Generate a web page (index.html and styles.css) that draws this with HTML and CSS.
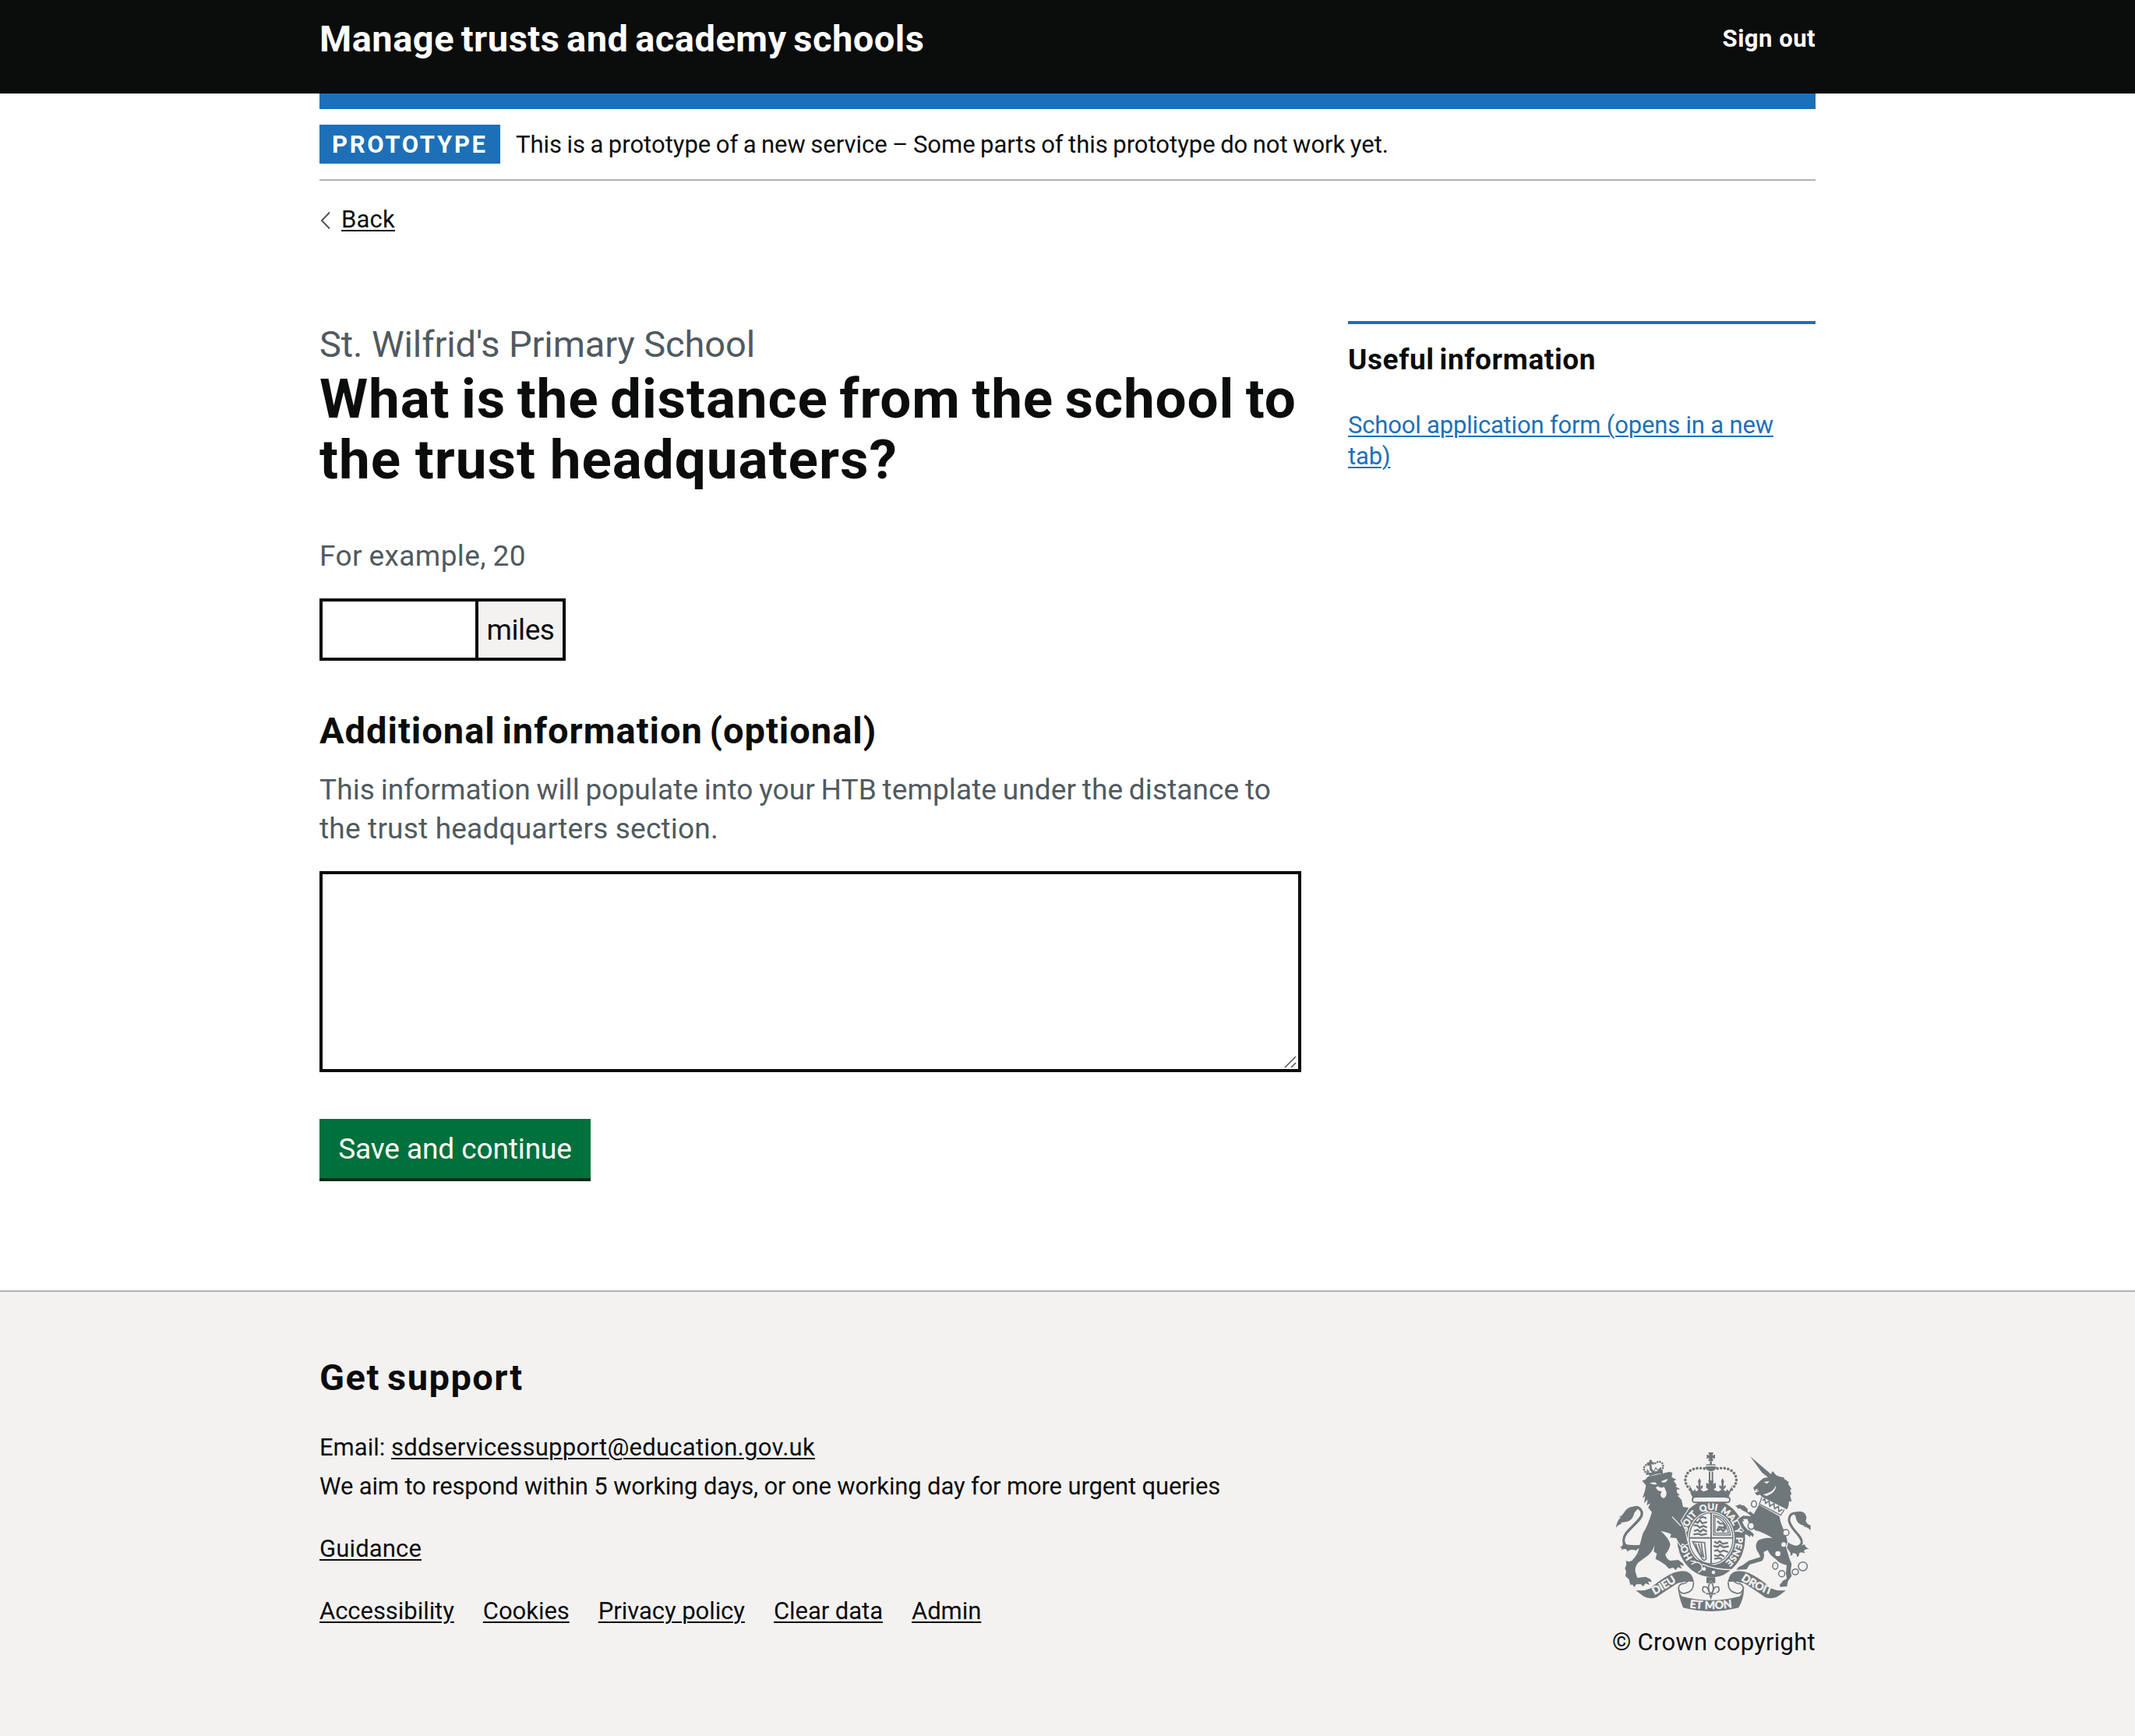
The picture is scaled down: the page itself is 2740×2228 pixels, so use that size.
FILE: index.html
```html
<!DOCTYPE html>
<html lang="en">
<head>
<meta charset="utf-8">
<title>What is the distance from the school to the trust headquaters?</title>
<link rel="stylesheet" href="styles.css">
</head>
<body>
<header class="header">
  <div class="container header-row">
    <a class="header-title" href="#">Manage trusts and academy schools</a>
    <a class="header-link" href="#">Sign out</a>
  </div>
</header>
<div class="container">
  <div class="bar"></div>
  <div class="phase">
    <strong class="tag">PROTOTYPE</strong>
    <span class="phase-text">This is a prototype of a new service – Some parts of this prototype do not work yet.</span>
  </div>
  <a class="back" href="#">
    <svg class="back-arrow" viewBox="0 0 14 24"><path d="M13 1.500 3 12l10 10.500" fill="none" stroke="#505a5f" stroke-width="2"/></svg>
    <span class="back-text">Back</span>
  </a>
  <main class="main">
    <form class="form">
      <span class="caption">St. Wilfrid's Primary School</span>
      <h1 class="title">What is the distance from the school to <span class="title-end">the trust headquaters?</span></h1>
      <div class="hint example">For example, 20</div>
      <div class="input-group">
        <input class="input" type="text">
        <div class="suffix">miles</div>
      </div>
      <label class="label" for="info">Additional information (optional)</label>
      <div class="hint info-hint">This information will populate into your HTB template under the distance to <span class="hint-end">the trust headquarters section.</span></div>
      <div class="textarea-wrap">
        <textarea class="textarea" id="info"></textarea>
        <svg class="grip" viewBox="0 0 18 18"><path d="M2 16 16 2M10 16l6-6" fill="none" stroke="#505050" stroke-width="1.500"/></svg>
      </div>
      <button class="button" type="button">Save and continue</button>
    </form>
    <aside class="aside">
      <h2 class="aside-title">Useful information</h2>
      <a class="aside-link" href="#">School application form (opens in a new tab)</a>
    </aside>
  </main>
</div>
<footer class="footer">
  <div class="container footer-row">
    <div class="support">
      <h2 class="support-title">Get support</h2>
      <p class="support-line">Email: <a class="email" href="#">sddservicessupport@education.gov.uk</a></p>
      <p class="support-line tight">We aim to respond within 5 working days, or one working day for more urgent queries</p>
      <p class="support-line guidance"><a href="#">Guidance</a></p>
      <nav class="links"><a href="#">Accessibility</a><a href="#">Cookies</a><a href="#">Privacy policy</a><a href="#">Clear data</a><a href="#">Admin</a></nav>
    </div>
    <div class="copyright">
      <svg class="crest" viewBox="72 42 750 612">
        <defs>
          <path id="motto" d="M438 484A96 110 0 0 1 438 264A96 110 0 0 1 438 484" pathLength="100"/>
          <path id="scroll-left" d="M212 595Q260 570 312 534"/>
          <path id="scroll-mid" d="M346 638Q437 652 528 638"/>
          <path id="scroll-right" d="M552 532Q606 570 668 591"/>
        </defs>
        <!-- garter and shield -->
        <ellipse class="g" cx="438" cy="373" rx="131" ry="148"/>
        <ellipse class="l" cx="438" cy="373" rx="90" ry="104"/>
        <ellipse class="s3" cx="438" cy="373" rx="84" ry="98"/>
        <path class="s" stroke-width="6" d="M438 275v196M354 371h168"/>
        <path class="s" stroke-width="7" d="M374 308l12 5 8-10 10 12 18-5M370 322l16 2 8 8 14-7 14 6M372 345l14-5 10 8 12-9 14 8M370 358l18-3 12 5 22-4M394 296l12-6 14 6M450 386l12 6 9-8 12 10 20-4M448 402l16 4 8-8 14 9 20-3M450 422l12-4 10 8 14-6 18 6M450 438l14 4 10-7 14 8M450 452l20-3 10 4"/>
        <path class="s3" d="M447 283Q500 290 513 360H447zM453 290Q490 300 505 353H453z"/>
        <path class="s" stroke-width="7" d="M462 306l10 10 14 0 8 18-10 12-8-10-14 8M468 328l18 4 10-10M461 345l8-18"/>
        <path class="s" stroke-width="5" d="M367 386l46 3 6 62q-5 10-14 3Q385 425 367 386zM378 392q12 38 22 50M389 392q8 26 15 52M400 392q3 28 10 56"/>
        <path class="g" d="M462 479Q500 470 521 430L508 480Q490 500 460 500z"/>
        <!-- belt buckle and strap -->
        <path class="g" d="M362 462q20-14 42 2l44 12q40 10 72 10-35 42-85 36-30-2-52-20-22 0-23-18z"/>
        <path class="ls" stroke-width="4" d="M362 473q24-18 40 4 6 20-14 27M404 472q50 22 120 22M358 460l20 2"/>
        <circle class="l" cx="411" cy="491" r="7"/><circle class="l" cx="447" cy="504" r="7"/>
        <g class="motto">
          <text><textPath href="#motto" startOffset="17">HO</textPath></text>
          <text><textPath href="#motto" startOffset="35">SOIT</textPath></text>
          <text><textPath href="#motto" startOffset="48.500">QUI</textPath></text>
          <text><textPath href="#motto" startOffset="61.500">MAL</textPath></text>
          <text><textPath href="#motto" startOffset="70.500">Y</textPath></text>
          <text><textPath href="#motto" startOffset="82.500">PENSE</textPath></text>
        </g>
        <!-- crown -->
        <rect class="ls g2" x="366" y="213" width="144" height="22" rx="11"/>
        <path class="g" d="M354 166l14 26 8-8 4 9 10-8q-14-10-8-16 8 2 7 8 2-16-2-24l6-12 6 12q-4 8-1 24 0-8 7-8 5 8-8 16l12 8 18-7q-8-8-6-14l12 5-5-20h19l-5 20 12-5q2 6-6 14l18 7 12-8q-12-8-8-16 7 0 7 8 3-16-1-24l6-12 6 12q-4 8-2 24-1-6 7-8 6 6-8 16l10 8 4-9 8 8 14-26-10 34-9 18q-66-14-134 0l-9-18z"/>
        <path class="dots" d="M357 185Q336 164 339 143C343 119 360 105 388 103Q404 102 422 106M517 185Q538 164 535 143C531 119 514 105 486 103Q470 102 452 106"/>
        <path class="s" stroke-width="6" d="M432 116v34M443 116v34"/>
        <path class="g" d="M427 42h20l-4 12 10-4v17l-10-4 4 12h-20l4-12-10 4V50l10 4zM433 76h8v12h14v4h-36v-4h14zM416 96h42q-2 18-21 19-19-1-21-19zM427 150h21l-5 14 13-5v22l-13-5 4 14h-20l4-14-12 5v-22l12 5z"/>
        <!-- lion -->
        <path class="g cut" d="M194 136L277 117 289 120 286 137 304 147 294 152 306 168 301 173 319 184 306 185 306 196 318 208 308 207 324 225 330 252 352 255Q330 290 320 305L337 340 346 385 350 392 337 398 326 392 322 402 311 386 304 372 280 370 284 357 272 352 244 344Q275 372 281 396 276 420 262 434 264 450 280 459L312 456 330 470 333 480 318 475 326 490 310 484 302 495 292 486 276 490Q262 472 242 462L224 452 229 432 217 424 220 400Q212 424 196 438L158 466Q144 482 146 500L154 525 186 521 205 530 209 541 195 539 201 553 186 546 176 558 167 549 150 550 142 561 134 550 127 553 122 531 108 518 111 500 106 488 112 474 110 460 122 463 133 459Q160 432 163 400L175 355Q196 320 210 272L196 255 204 238 190 246 194 223 180 238 184 211 174 218 184 187 187 169 172 151 184 148z"/>
        <path class="s" stroke-width="10" d="M164 406C105 425 88 385 112 352C140 318 185 290 168 265C154 242 128 257 118 280"/>
        <path class="g" d="M150 251Q120 246 104 272 96 286 82 292 90 292 92 290 74 306 72 332 82 318 98 316 88 314 92 312 132 310 138 288 142 270 158 258zM98 388Q105 402 165 398L150 420Q120 412 115 428 118 416 106 414 96 414 90 420 100 412 86 406 100 406 98 388z"/>
        <path class="l" d="M202 160l20-3 8 8q-18 3-28-5zM246 153l24-9q0 14-18 15zM224 178q14-13 34-2l8 20q1 18-10 22-11 0-13-14l5-11-14-4z"/>
        <path class="g" d="M232 173l24-7-3 12q-12 0-21-5z"/>
        <path class="ls" stroke-width="4" d="M288 290L322 326"/>
        <path class="s" stroke-width="8" d="M199 131Q222 119 252 119"/>
        <path class="dots small" d="M191 125Q172 106 184 93 194 86 203 93M248 113Q259 90 246 80 233 74 221 86"/>
        <path class="g" d="M201 71h8l2 8 8 1-2 10-9-3 4 31h-9l-3-28-8 1-2-9 9-2zM190 128l1-22 10 11 6-15 10 11 8-15 8 11 12-11 4 18z"/>
        <path class="l" d="M196 119l9-7 5 9zM218 115l8-10 7 9z"/>
        <!-- unicorn -->
        <path class="s" stroke-width="9" d="M744 400Q778 415 787 390C790 362 742 340 738 303C738 280 754 272 776 276"/>
        <path class="g" d="M753 277Q780 262 797 275 810 290 802 305 806 318 821 323V342Q810 328 790 328 800 326 796 324 772 320 766 300 764 284 753 277zM735 388Q762 414 798 396 800 408 817 415 800 412 795 422 802 428 795 430 782 422 776 432 780 440 768 445 772 430 750 430 757 438 742 440 750 432 730 410z"/>
        <path class="g" d="M588 57L659 118 668 126 675 114 688 130Q704 138 720 138L718 143 738 157 734 162 748 184 742 186 748 204 742 206 748 232 738 230 736 248 730 262 632 212 627 205 615 208 606 198 624 190 604 189 601 178 626 152 640 141 657 138 634 120z"/>
        <path class="l" d="M641 156l22-4-10 11zM688 168Q690 195 652 210L638 205Q680 195 688 168zM606 185l14-3-7 8z"/>
        <path class="s3" d="M633 215l-9 26 82 43 14-22"/>
        <path class="s" stroke-width="5" d="M636 228l8-8 4 18 13-9 3 20 16-10 2 20 15-9 2 20 14-8"/>
        <path class="ls" stroke-width="20" stroke-linejoin="round" d="M562 292L548 302 560 328 574 344"/>
        <path class="g" d="M622 244L701 288Q704 315 722 348L732 385 726 405 740 452 748 472 744 500 748 518 734 538 730 558 704 560 702 552 716 535 729 529 726 506 729 476Q700 470 686 452 665 440 656 418L640 426Q646 446 634 460L586 474 575 492 535 494 543 484 564 473 583 459 628 445 620 428Q602 404 618 382 640 368 674 372 640 350 608 342 588 328 578 300L598 288z"/>
        <path class="s" stroke-width="12" stroke-linejoin="round" d="M604 295L562 292 548 302 560 328 574 344M600 286L580 270 562 252 538 252M562 260l26 14"/>
        <path class="g" d="M530 248l20-6 16 10-6 14-14-10zM541 302l14-10 10 14-16 6zM566 338l20 4 16 14-2 12-10-8-2 8-14-10-12 2z"/>
        <g class="chain"><ellipse cx="603" cy="241" rx="10" ry="12"/><ellipse class="l" cx="592" cy="325" rx="12" ry="13"/><circle class="l" cx="726" cy="351" r="12"/><ellipse cx="685" cy="479" rx="10" ry="13"/><circle cx="710" cy="509" r="12"/><ellipse cx="762" cy="502" rx="12" ry="11"/><circle cx="791" cy="481" r="17"/></g>
        <circle class="l" cx="717" cy="397" r="9"/><circle class="l" cx="695" cy="432" r="10"/><circle class="l" cx="584" cy="266" r="6"/>
        <!-- scrolls -->
        <path class="g" d="M148 573Q180 577 203 566 250 525 290 507 350 485 366 522L373 542Q350 536 310 545 255 580 228 600 196 610 172 592zM726 573Q694 577 671 566 624 525 584 507 524 485 508 522L501 542Q524 536 564 545 619 580 646 600 678 610 702 592z"/>
        <path class="ls s5" d="M373 540Q364 566 338 578M501 540Q510 566 536 578"/>
        <path class="s" stroke-width="5" d="M345 505C374 520 346 548 324 548 302 560 316 590 340 584Q372 578 370 542M529 505C500 520 528 548 550 548 572 560 558 590 534 584Q502 578 504 542"/>
        <path class="g" d="M310 552Q312 580 326 596 437 626 548 596 562 580 564 552 568 600 544 640 437 668 330 640 310 590 310 552z"/>
        <path class="g" d="M420 523h34v22h-9l-8-10-8 10h-9z"/>
        <path class="s" stroke-width="5" d="M437 540Q420 560 434 584H441Q454 560 437 540zM430 580Q426 556 408 560 400 578 416 582M444 580Q448 556 466 560 474 578 458 582M418 586h38M432 588l5 14 5-14"/>
        <g class="scroll">
          <text><textPath href="#scroll-left" startOffset="50%">DIEU</textPath></text>
          <text><textPath href="#scroll-mid" startOffset="50%">ET MON</textPath></text>
          <text><textPath href="#scroll-right" startOffset="50%">DROIT</textPath></text>
        </g>
      </svg>
      <span class="copyright-text">© Crown copyright</span>
    </div>
  </div>
</footer>
</body>
</html>
```
FILE: styles.css
```css
* { box-sizing: border-box; }
body { margin: 0; font-family: Roboto, "Liberation Sans", sans-serif; font-size: 31px; line-height: 50px; color: #0b0c0c; background: #fff; -webkit-font-smoothing: antialiased; }
h1, h2, p { margin: 0; }
a { color: inherit; text-decoration-thickness: 2px; text-underline-offset: 3px; }
.container { width: 1920px; margin: 0 auto; }

.header { height: 120px; background: #0b0c0c; color: #fff; }
.header-row { display: flex; justify-content: space-between; align-items: flex-start; }
.header-title, .header-link { font-weight: 700; text-decoration: none; }
.header-title { padding-top: 20px; font-size: 47px; line-height: 60px; letter-spacing: .5px; word-spacing: -3.500px; }
.header-link { padding-top: 30px; line-height: 40px; letter-spacing: .5px; }

.bar { height: 20px; background: #1d70b8; }
.phase { display: flex; gap: 20px; padding: 20px 0; border-bottom: 2px solid #b1b4b6; }
.tag { width: 232px; padding: 2px 0 0 16px; background: #1d70b8; color: #fff; line-height: 48px; letter-spacing: 2.700px; }
.phase-text { padding-top: 2px; line-height: 48px; letter-spacing: 0; word-spacing: -1.250px; }

.back { display: flex; align-items: center; gap: 14px; width: max-content; margin-top: 30px; line-height: 40px; text-decoration: none; }
.back-arrow { width: 14px; height: 24px; margin-top: 1px; }
.back-text { text-decoration: underline 2px; text-underline-offset: 3px; letter-spacing: .2px; }

.main { display: grid; grid-template-columns: 1260px 600px; justify-content: space-between; align-items: start; padding: 110px 0 140px; }
.form { display: flex; flex-direction: column; align-items: flex-start; }
.caption { font-size: 47px; line-height: 60px; color: #505a5f; letter-spacing: -.1px; }
.title { margin-top: 1px; font-size: 71px; line-height: 78px; letter-spacing: .9px; word-spacing: -4px; }
.title-end { letter-spacing: 1px; word-spacing: -1px; }
.hint { font-size: 37px; line-height: 50px; color: #505a5f; letter-spacing: .1px; word-spacing: -1.600px; }
.hint-end { letter-spacing: .2px; word-spacing: 0; }
.example { margin-top: 60px; letter-spacing: .4px; word-spacing: -1px; }
.input-group { display: flex; width: 316px; height: 80px; margin-top: 29px; }
.input { width: 204px; border: 4px solid #0b0c0c; border-radius: 0; background: #fff; }
.suffix { flex: 1; border: 4px solid #0b0c0c; border-left: 0; background: #f3f2f1; font-size: 37px; line-height: 73px; text-align: center; letter-spacing: -.4px; }
.label { margin-top: 60px; font-size: 47px; line-height: 60px; font-weight: 700; letter-spacing: 1px; word-spacing: -4px; }
.info-hint { margin-top: 21px; }
.textarea-wrap { position: relative; width: 1260px; height: 258px; margin-top: 29px; }
.textarea { display: block; width: 100%; height: 100%; border: 4px solid #0b0c0c; border-radius: 0; background: #fff; resize: none; }
.grip { position: absolute; right: 5px; bottom: 4px; width: 18px; height: 18px; }
.button { width: 348px; height: 76px; margin: 60px 0 4px; padding: 2px 0 0; border: 0; background: #00703c; box-shadow: 0 4px 0 #002d18; color: #fff; font: 37px/74px Roboto, sans-serif; letter-spacing: -.1px; }

.aside { border-top: 4px solid #1d70b8; padding-top: 21px; }
.aside-title { font-size: 37px; line-height: 50px; letter-spacing: .6px; word-spacing: -3px; }
.aside-link { display: block; margin-top: 39px; line-height: 40px; color: #1d70b8; letter-spacing: -.18px; }

.footer { min-height: 572px; border-top: 2px solid #b1b4b6; background: #f3f2f1; padding: 80px 0 101px; }
.footer-row { display: flex; justify-content: space-between; align-items: flex-end; }
.support { padding-bottom: 34px; }
.support-title { margin-bottom: 35px; font-size: 47px; line-height: 60px; letter-spacing: 1.500px; word-spacing: -4px; }
.email { letter-spacing: .28px; }
.tight { letter-spacing: -.15px; }
.guidance { margin: 30px 0; letter-spacing: .14px; }
.links { display: flex; gap: 37px; letter-spacing: -.05px; }
.copyright { display: flex; flex-direction: column; align-items: flex-end; margin-bottom: -1px; }
.crest { width: 250px; height: 204px; margin: 0 6px 20px 0; }
.copyright-text { line-height: 40px; letter-spacing: .25px; }

.g { fill: #6f777b; }
.l { fill: #f3f2f1; }
.cut { stroke: #f3f2f1; stroke-width: 7px; paint-order: stroke; }
.s, .s3, .chain { fill: none; stroke: #6f777b; }
.s3 { stroke-width: 4px; }
.s5 { stroke-width: 5px; }
.ls { fill: none; stroke: #f3f2f1; }
.g2 { fill: #f3f2f1; stroke: #6f777b; stroke-width: 6px; }
.chain { stroke-width: 4.500px; }
.dots { fill: none; stroke: #6f777b; stroke-width: 11px; stroke-linecap: round; stroke-dasharray: 0 14; }
.small { stroke-width: 8px; stroke-dasharray: 0 10; }
.motto, .scroll { fill: #f3f2f1; stroke: #f3f2f1; stroke-width: 1.500px; font-family: Lato, sans-serif; font-weight: 700; text-anchor: middle; }
.motto { font-size: 35px; }
.scroll { font-size: 42px; }
```
